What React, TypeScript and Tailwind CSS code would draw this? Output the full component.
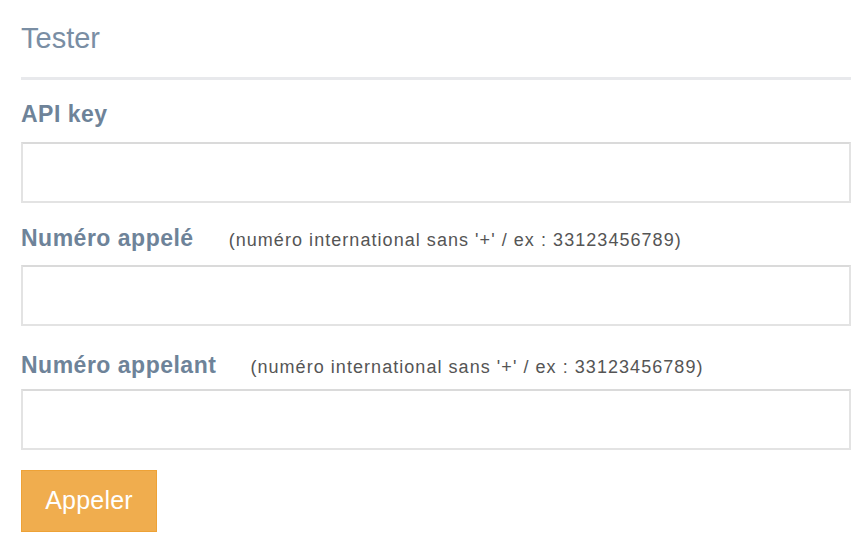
import React from "react";

const hint = "(numéro international sans '+' / ex : 33123456789)";

const Field = ({
  label,
  note,
  noteGap,
  labelClass,
  inputClass,
}: {
  label: string;
  note?: string;
  noteGap?: string;
  labelClass: string;
  inputClass: string;
}) => (
  <>
    <div className={`flex items-baseline ${labelClass}`}>
      <label className="text-[23px] font-bold leading-none tracking-[0.5px] text-[#6e8399]">{label}</label>
      {note && (
        <span className={`text-[18px] leading-none tracking-[1.05px] text-[#555] ${noteGap}`}>{note}</span>
      )}
    </div>
    <input
      type="text"
      className={`block w-full h-[61px] border-2 border-[#e3e3e3] border-t-[#dadada] bg-white px-3 outline-none ${inputClass}`}
    />
  </>
);

export default function App() {
  return (
    <div
      className="min-h-screen bg-white pl-[21px] pr-[9px]"
      style={{ fontFamily: '"Liberation Sans", Arial, sans-serif' }}
    >
      {/* title */}
      <h2 className="pt-[24px] text-[29px] leading-none text-[#7a8ea4]">Tester</h2>
      <div className="mt-[24px] border-t-[3px] border-[#e8e9ec]" />

      {/* form */}
      <Field label="API key" labelClass="mt-[23px]" inputClass="mt-[16px]" />
      <Field
        label="Numéro appelé"
        note={hint}
        noteGap="ml-[35px]"
        labelClass="mt-[24px]"
        inputClass="mt-[15px]"
      />
      <Field
        label="Numéro appelant"
        note={hint}
        noteGap="ml-[34px]"
        labelClass="mt-[28px]"
        inputClass="mt-[12px]"
      />

      <button className="mt-[20px] h-[62px] w-[136px] bg-[#f0ad4e] border border-[#eea236] text-[25px] tracking-[0.2px] text-white">
        Appeler
      </button>
    </div>
  );
}
